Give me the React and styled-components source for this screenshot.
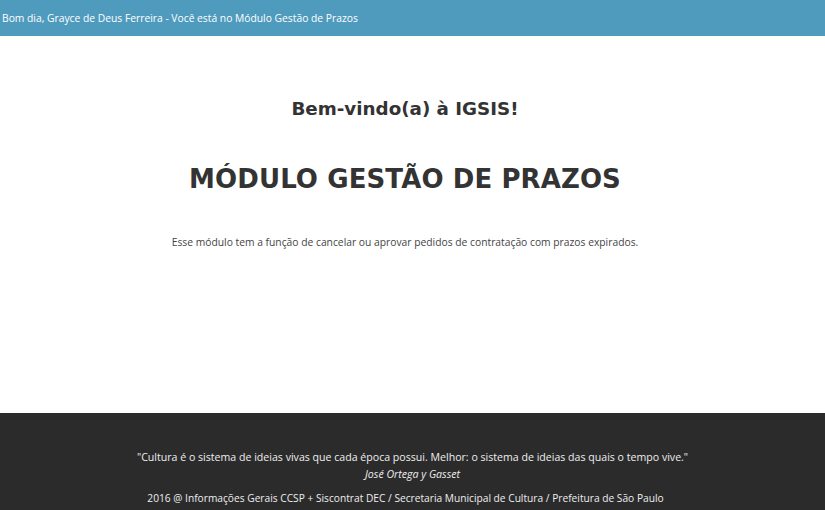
import React from 'react';
import styled, { createGlobalStyle } from 'styled-components';

const Global = createGlobalStyle`
    html, body {
        margin: 0;
        padding: 0;
        background: #fff;
    }
    body {
        font-family: 'Open Sans', 'Liberation Sans', sans-serif;
        color: #333;
    }
`;

const Page = styled.div`
    display: flex;
    flex-direction: column;
    min-height: 510px;
`;

const TopBar = styled.header`
    height: 36px;
    display: flex;
    align-items: center;
    padding: 0 2px;
    background: #4f9bbe;
    color: #fff;
    font-size: 10.3px;
`;

const Main = styled.main`
    flex: 1;
    display: flex;
    flex-direction: column;
    align-items: center;
    padding: 62px 15px 0 0;
`;

const Welcome = styled.h3`
    margin: 0;
    font-family: 'DejaVu Sans', sans-serif;
    font-weight: bold;
    font-size: 18.3px;
    color: #333;
`;

const Title = styled.h1`
    margin: 45px 0 0;
    font-family: 'DejaVu Sans', sans-serif;
    font-weight: bold;
    font-size: 26px;
    letter-spacing: 0.1px;
    color: #333;
`;

const Lead = styled.p`
    margin: 41px 0 0;
    font-size: 10.3px;
    color: #444;
`;

const Foot = styled.footer`
    height: 97px;
    background: #2b2b2b;
    color: #eee;
    font-size: 10.2px;
    text-align: center;
    display: flex;
    flex-direction: column;
    align-items: center;
    padding-top: 36px;
    box-sizing: border-box;

    & p {
        margin: 0;
        line-height: 17px;
    }

    & .quote {
        font-size: 10.6px;
    }

    & em {
        display: block;
    }

    & .copy {
        margin-top: 7px;
        padding-right: 14px;
    }
`;

export default function App() {
    return (
        <Page>
            <Global />
            <TopBar>Bom dia, Grayce de Deus Ferreira - Você está no Módulo Gestão de Prazos</TopBar>
            <Main>
                <Welcome>Bem-vindo(a) à IGSIS!</Welcome>
                <Title>MÓDULO GESTÃO DE PRAZOS</Title>
                <Lead>Esse módulo tem a função de cancelar ou aprovar pedidos de contratação com prazos expirados.</Lead>
            </Main>
            <Foot>
                <p className='quote'>
                    "Cultura é o sistema de ideias vivas que cada época possui. Melhor: o sistema de ideias das quais o tempo vive."
                    <em>José Ortega y Gasset</em>
                </p>
                <p className='copy'>2016 @ Informações Gerais CCSP + Siscontrat DEC / Secretaria Municipal de Cultura / Prefeitura de São Paulo</p>
            </Foot>
        </Page>
    )
}
